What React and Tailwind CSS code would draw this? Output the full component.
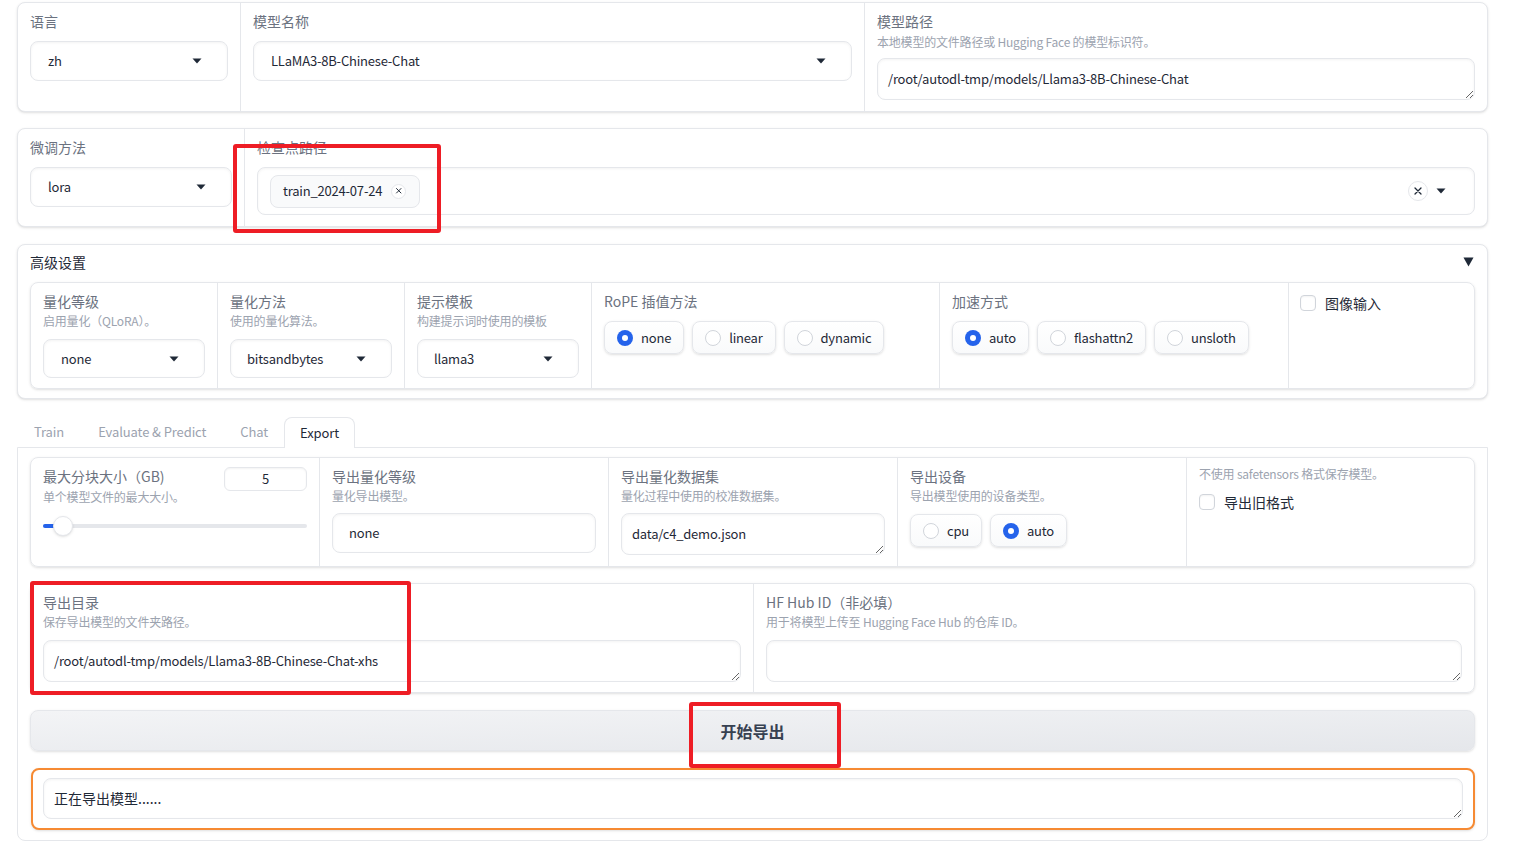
import React from "react";

const Caret = () => (
  <svg width="10" height="6" viewBox="0 0 10 6" className="shrink-0">
    <path d="M0.5 0.5h9L5 5.5z" fill="#1f2937" />
  </svg>
);

const Label = ({ children, className = "" }) => (
  <div className={"text-sm leading-5 text-[#6b7280] " + className}>{children}</div>
);
const Info = ({ children, className = "" }) => (
  <div className={"text-xs leading-4 tracking-[-0.2px] text-[#9ca3af] " + className}>{children}</div>
);

const Dropdown = ({ value, h = "h-[40px]", arrow = true, pl = "pl-[17px]", pr = "pr-[25px]" }) => (
  <div
    className={
      "flex items-center justify-between rounded-lg border border-[#e5e7eb] bg-white shadow-[inset_0_1px_3px_rgba(0,0,0,0.05)] text-[13px] tracking-[-0.2px] text-[#1f2937] " +
      h + " " + pl + " " + pr
    }
  >
    <span>{value}</span>
    {arrow && <Caret />}
  </div>
);

const TextArea = ({ value = "", h = "h-[42px]", className = "text-[13px] tracking-[-0.2px]" }) => (
  <textarea
    readOnly
    value={value}
    className={
      "block w-full resize-y rounded-lg border border-[#e5e7eb] bg-white px-[10px] py-[10px] leading-5 text-[#1f2937] shadow-[inset_0_1px_3px_rgba(0,0,0,0.05)] outline-none overflow-hidden " +
      h + " " + className
    }
  />
);

const Radio = ({ label, checked }) => (
  <div className="flex h-[33px] items-center gap-[8px] rounded-lg border border-[#e5e7eb] bg-gradient-to-b from-white to-[#f9fafb] pl-[12px] pr-[12px] text-[13px] tracking-[-0.2px] text-[#1f2937] shadow-sm">
    {checked ? (
      <span className="flex h-[16px] w-[16px] items-center justify-center rounded-full bg-[#2563eb]">
        <span className="h-[6px] w-[6px] rounded-full bg-white" />
      </span>
    ) : (
      <span className="h-[16px] w-[16px] rounded-full border border-[#d1d5db] bg-white" />
    )}
    <span>{label}</span>
  </div>
);

const Checkbox = ({ label }) => (
  <div className="flex items-center gap-[9px] text-sm text-[#1f2937]">
    <span className="h-[16px] w-[16px] rounded-[4px] border border-[#d1d5db] bg-white shadow-[inset_0_1px_2px_rgba(0,0,0,0.05)]" />
    <span>{label}</span>
  </div>
);

const XCircle = ({ size = 14 }) => (
  <span
    className="flex items-center justify-center rounded-full border border-[#e5e7eb] bg-white"
    style={{ width: size, height: size }}
  >
    <svg width={size * 0.5} height={size * 0.5} viewBox="0 0 10 10">
      <path d="M2 2l6 6M8 2l-6 6" stroke="#1f2937" strokeWidth="1.3" strokeLinecap="round" />
    </svg>
  </span>
);

const RedBox = ({ className }) => (
  <div className={"pointer-events-none absolute rounded-[3px] border-[4px] border-[#ee1d25] " + className} />
);

export default function App() {
  return (
    <div className="relative h-[852px] w-[1520px] overflow-hidden bg-white font-['Noto_Sans_CJK_SC','Noto_Sans',sans-serif]">
      <div className="ml-[17px] flex w-[1471px] flex-col pt-[2px]">
        {/* Row 1 */}
        <div className="flex h-[110px] rounded-lg border border-[#e5e7eb] bg-white shadow-sm">
          <div className="w-[223px] border-r border-[#e5e7eb] px-[12px] pt-[8px]">
            <Label>语言</Label>
            <div className="mt-[10px]">
              <Dropdown value="zh" />
            </div>
          </div>
          <div className="w-[624px] border-r border-[#e5e7eb] px-[12px] pt-[8px]">
            <Label>模型名称</Label>
            <div className="mt-[10px]">
              <Dropdown value="LLaMA3-8B-Chinese-Chat" />
            </div>
          </div>
          <div className="flex-1 px-[12px] pt-[8px]">
            <Label>模型路径</Label>
            <Info className="mt-[3px]">本地模型的文件路径或 Hugging Face 的模型标识符。</Info>
            <div className="mt-[8px]">
              <TextArea value="/root/autodl-tmp/models/Llama3-8B-Chinese-Chat" />
            </div>
          </div>
        </div>

        {/* Row 2 */}
        <div className="mt-[16px] flex h-[99px] rounded-lg border border-[#e5e7eb] bg-white shadow-sm">
          <div className="w-[227px] border-r border-[#e5e7eb] px-[12px] pt-[8px]">
            <Label>微调方法</Label>
            <div className="mt-[10px]">
              <Dropdown value="lora" />
            </div>
          </div>
          <div className="flex-1 px-[12px] pt-[8px]">
            <Label>检查点路径</Label>
            <div className="mt-[10px] flex h-[48px] items-center justify-between rounded-lg border border-[#e5e7eb] bg-white pl-[12px] pr-[28px] shadow-[inset_0_1px_3px_rgba(0,0,0,0.05)]">
              <div className="flex h-[33px] items-center gap-[9px] rounded-lg border border-[#e5e7eb] bg-[#f9fafb] pl-[12px] pr-[13px] text-[13px] tracking-[-0.2px] text-[#1f2937]">
                <span>train_2024-07-24</span>
                <XCircle size={15} />
              </div>
              <div className="flex items-center gap-[8px]">
                <XCircle size={20} />
                <Caret />
              </div>
            </div>
          </div>
        </div>

        {/* Advanced settings */}
        <div className="mt-[17px] rounded-lg border border-[#e5e7eb] bg-white pb-[9px] shadow-sm">
          <div className="flex items-center justify-between pl-[12px] pr-[13px] pt-[7px]">
            <div className="text-sm leading-5 text-[#1f2937]">高级设置</div>
            <svg width="11" height="10" viewBox="0 0 11 10">
              <path d="M0.5 0.5h10L5.5 9.5z" fill="#1f2937" />
            </svg>
          </div>
          <div className="mx-[12px] mt-[10px] flex h-[107px] rounded-lg border border-[#e5e7eb] shadow-sm">
            <div className="w-[187px] border-r border-[#e5e7eb] px-[12px] pt-[8px]">
              <Label>量化等级</Label>
              <Info className="mt-[2px]">启用量化（QLoRA）。</Info>
              <div className="mt-[10px]">
                <Dropdown value="none" h="h-[39px]" />
              </div>
            </div>
            <div className="w-[187px] border-r border-[#e5e7eb] px-[12px] pt-[8px]">
              <Label>量化方法</Label>
              <Info className="mt-[2px]">使用的量化算法。</Info>
              <div className="mt-[10px]">
                <Dropdown value="bitsandbytes" h="h-[39px]" pl="pl-[16px]" />
              </div>
            </div>
            <div className="w-[187px] border-r border-[#e5e7eb] px-[12px] pt-[8px]">
              <Label>提示模板</Label>
              <Info className="mt-[2px]">构建提示词时使用的模板</Info>
              <div className="mt-[10px]">
                <Dropdown value="llama3" h="h-[39px]" pl="pl-[16px]" />
              </div>
            </div>
            <div className="w-[348px] border-r border-[#e5e7eb] px-[12px] pt-[8px]">
              <Label>RoPE 插值方法</Label>
              <div className="mt-[10px] flex gap-[8px]">
                <Radio label="none" checked />
                <Radio label="linear" />
                <Radio label="dynamic" />
              </div>
            </div>
            <div className="w-[349px] border-r border-[#e5e7eb] px-[12px] pt-[8px]">
              <Label>加速方式</Label>
              <div className="mt-[10px] flex gap-[8px]">
                <Radio label="auto" checked />
                <Radio label="flashattn2" />
                <Radio label="unsloth" />
              </div>
            </div>
            <div className="flex-1 px-[11px] pt-[10px]">
              <Checkbox label="图像输入" />
            </div>
          </div>
        </div>

        {/* Tabs */}
        <div className="mt-[18px] flex h-[30px] items-end pl-[1px] text-[13px] tracking-[-0.1px]">
          <div className="px-[16px] pb-[5px] leading-5 text-[#9ca3af]">Train</div>
          <div className="px-[18px] pb-[5px] leading-5 text-[#9ca3af]">Evaluate &amp; Predict</div>
          <div className="px-[16px] pb-[5px] leading-5 text-[#9ca3af]">Chat</div>
          <div className="relative -mb-px h-[31px] rounded-t-lg border border-b-0 border-[#e5e7eb] bg-white px-[15px] pt-[5px] leading-5 text-[#1f2937]">
            Export
          </div>
          <div className="flex-1" />
        </div>

        {/* Tab panel */}
        <div className="flex flex-col rounded-b-lg border border-[#e5e7eb] px-[12px] pb-[10px] pt-[9px]">
          {/* Export row 1 */}
          <div className="flex h-[110px] rounded-lg border border-[#e5e7eb] shadow-sm">
            <div className="w-[289px] border-r border-[#e5e7eb] px-[12px] pt-[9px]">
              <div className="flex items-start justify-between">
                <Label className="mt-[-1px]">最大分块大小（GB)</Label>
                <div className="flex h-[24px] w-[83px] items-center justify-center rounded-md border border-[#e5e7eb] bg-white text-[13px] text-[#1f2937] shadow-[inset_0_1px_2px_rgba(0,0,0,0.05)]">
                  5
                </div>
              </div>
              <Info className="-mt-[2px]">单个模型文件的最大大小。</Info>
              <div className="relative mt-[19px] h-[4px] w-full rounded-full bg-[#e5e7eb]">
                <div className="absolute left-0 top-0 h-[4px] w-[14px] rounded-full bg-[#2563eb]" />
                <div className="absolute left-[10px] top-[-8px] h-[20px] w-[20px] rounded-full border border-[#e5e7eb] bg-white shadow" />
              </div>
            </div>
            <div className="w-[289px] border-r border-[#e5e7eb] px-[12px] pt-[8px]">
              <Label>导出量化等级</Label>
              <Info className="mt-[2px]">量化导出模型。</Info>
              <div className="mt-[9px]">
                <Dropdown value="none" arrow={false} pl="pl-[16px]" />
              </div>
            </div>
            <div className="w-[289px] border-r border-[#e5e7eb] px-[12px] pt-[8px]">
              <Label>导出量化数据集</Label>
              <Info className="mt-[2px]">量化过程中使用的校准数据集。</Info>
              <div className="mt-[9px]">
                <TextArea value="data/c4_demo.json" />
              </div>
            </div>
            <div className="w-[289px] border-r border-[#e5e7eb] px-[12px] pt-[8px]">
              <Label>导出设备</Label>
              <Info className="mt-[2px]">导出模型使用的设备类型。</Info>
              <div className="mt-[10px] flex gap-[8px]">
                <Radio label="cpu" />
                <Radio label="auto" checked />
              </div>
            </div>
            <div className="flex-1 px-[12px] pt-[8px]">
              <Info>不使用 safetensors 格式保存模型。</Info>
              <div className="mt-[10px]">
                <Checkbox label="导出旧格式" />
              </div>
            </div>
          </div>

          {/* Export row 2 */}
          <div className="mt-[16px] flex h-[110px] rounded-lg border border-[#e5e7eb] shadow-sm">
            <div className="w-[723px] border-r border-[#e5e7eb] px-[12px] pt-[8px]">
              <Label>导出目录</Label>
              <Info className="mt-[2px]">保存导出模型的文件夹路径。</Info>
              <div className="mt-[10px]">
                <TextArea value="/root/autodl-tmp/models/Llama3-8B-Chinese-Chat-xhs" />
              </div>
            </div>
            <div className="flex-1 px-[12px] pt-[8px]">
              <Label>HF Hub ID（非必填）</Label>
              <Info className="mt-[2px]">用于将模型上传至 Hugging Face Hub 的仓库 ID。</Info>
              <div className="mt-[10px]">
                <TextArea value="" />
              </div>
            </div>
          </div>

          {/* Button */}
          <div className="mt-[17px] flex h-[41px] items-center justify-center rounded-lg border border-[#e5e7eb] bg-gradient-to-br from-[#f3f4f6] to-[#e5e7eb] text-base font-bold text-[#374151] shadow-sm">
            开始导出
          </div>

          {/* Output */}
          <div className="ml-[1px] mt-[17px] h-[62px] rounded-lg border-2 border-[#f68a33] bg-white px-[10px] pt-[8px] shadow-sm">
            <TextArea value="正在导出模型......" h="h-[41px]" className="pt-[9px] text-sm" />
          </div>
        </div>
      </div>

      <RedBox className="left-[233px] top-[144px] h-[89px] w-[208px]" />
      <RedBox className="left-[30px] top-[581px] h-[114px] w-[381px]" />
      <RedBox className="left-[689px] top-[702px] h-[66px] w-[152px]" />
    </div>
  );
}
